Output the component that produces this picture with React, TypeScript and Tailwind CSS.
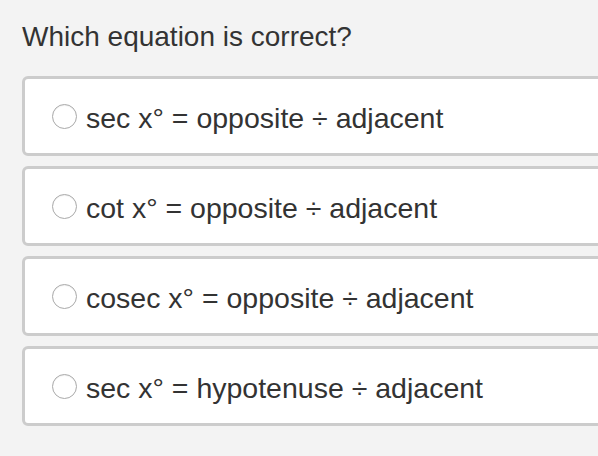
const options = [
  'sec x° = opposite ÷ adjacent',
  'cot x° = opposite ÷ adjacent',
  'cosec x° = opposite ÷ adjacent',
  'sec x° = hypotenuse ÷ adjacent',
];

export default function App() {
  return (
    <main
      className="min-h-[456px] w-[598px] overflow-hidden bg-[#f3f3f3] pl-[22px] pt-[21px] text-[#333]"
      style={{ fontFamily: '"Liberation Sans", Arial, sans-serif' }}
    >
      <h1 className="mb-[23px] text-[28px] leading-[32px]">Which equation is correct?</h1>
      <div className="flex w-[600px] flex-col gap-[10px]">
        {options.map((opt) => (
          <label
            key={opt}
            className="flex h-[80px] items-center rounded-[6px] border-[3px] border-[#cccccc] bg-white pl-[27px]"
          >
            <span className="mr-[9px] h-[25px] w-[25px] shrink-0 rounded-full border border-[#a9a9a9] bg-white shadow-[inset_0_1px_1px_rgba(0,0,0,0.06)]" />
            <span className="mt-[4px] text-[28.5px] leading-[32px]">{opt}</span>
          </label>
        ))}
      </div>
    </main>
  );
}
